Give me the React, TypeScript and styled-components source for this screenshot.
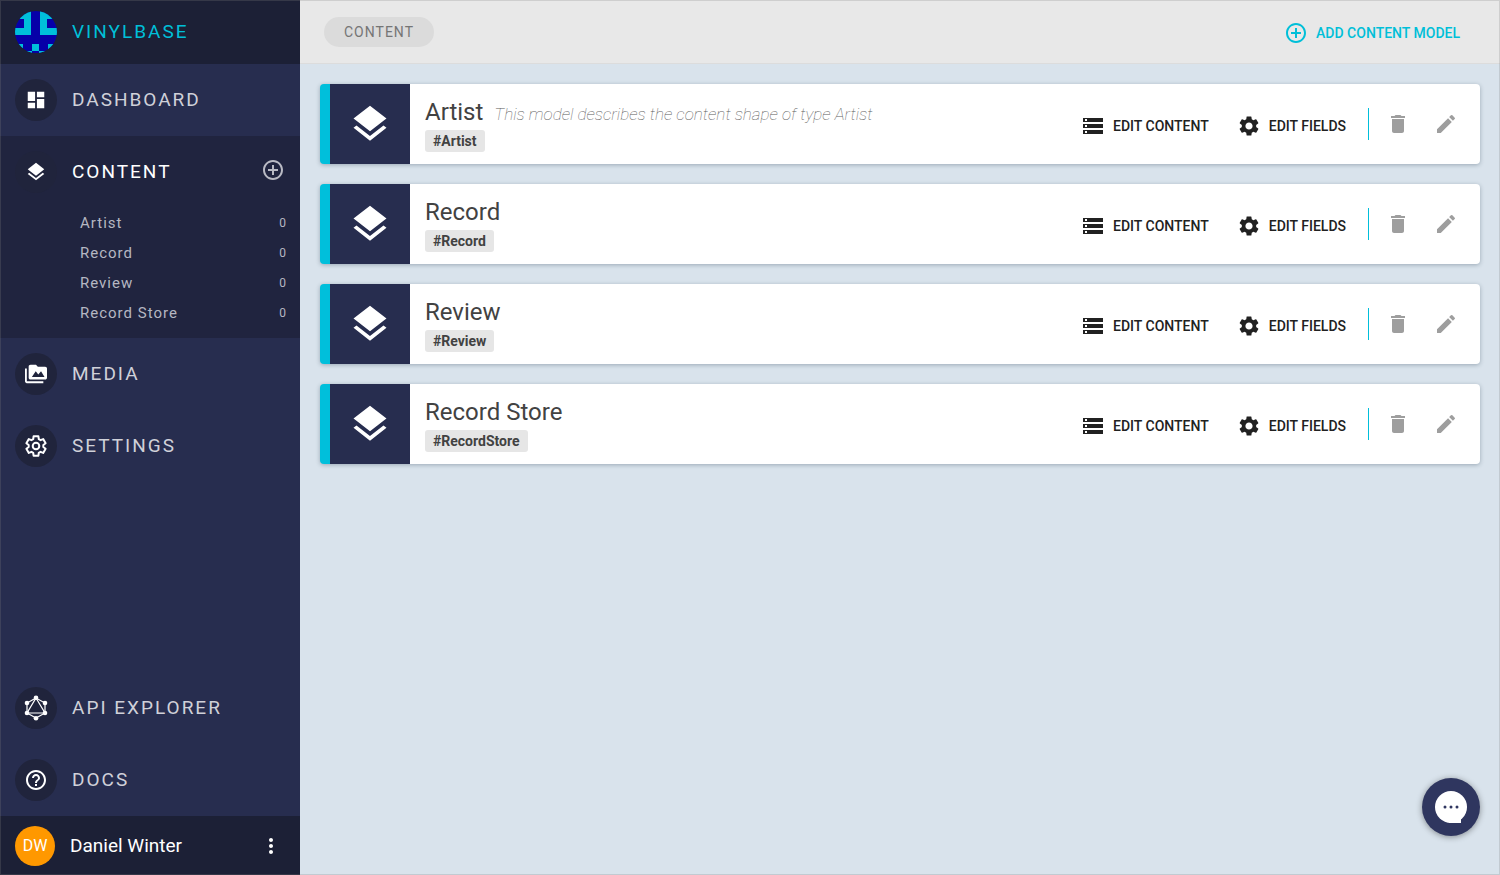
import React from 'react';
import styled, { createGlobalStyle } from 'styled-components';
import {
  MdAddCircleOutline,
  MdDashboard,
  MdDelete,
  MdEdit,
  MdHelpOutline,
  MdLayers,
  MdMoreVert,
  MdSettings,
  MdStorage,
} from 'react-icons/md';

const GlobalStyle = createGlobalStyle`
  * { box-sizing: border-box; }
  body {
    margin: 0;
    background: #d9e3ec;
    font-family: Roboto, "Liberation Sans", sans-serif;
  }
  button { border: 0; padding: 0; background: none; font-family: inherit; cursor: pointer; }
  a { color: inherit; text-decoration: none; }
  ul { list-style: none; margin: 0; padding: 0; }
  h1, h2, p { margin: 0; font-weight: 400; }
  svg { display: block; flex-shrink: 0; }
`;

const Page = styled.div`
  display: grid;
  grid-template-columns: 300px 1fr;
  min-height: 100vh;

  &::after {
    content: '';
    position: fixed;
    inset: 0;
    border: 1px solid rgba(128, 128, 128, 0.25);
    pointer-events: none;
  }
`;

const Sidebar = styled.aside`
  display: flex;
  flex-direction: column;
  background: #272d4f;
  color: #d0d1d9;
`;

const Brand = styled.a`
  display: flex;
  align-items: center;
  gap: 15px;
  height: 64px;
  padding: 0 15px;
  background: #1c2036;
  && { color: #00bfd8; }
  font-size: 19px;
  line-height: 24px;
  letter-spacing: 2px;
`;

const Nav = styled.nav`
  display: flex;
  flex: 1;
  flex-direction: column;
`;

const Section = styled.div<{ $active?: boolean; $pushed?: boolean }>`
  margin-top: ${(p) => (p.$pushed ? 'auto' : '0')};
  padding-bottom: ${(p) => (p.$active ? '10px' : '0')};
  background: ${(p) => (p.$active ? '#20243f' : 'transparent')};
  color: ${(p) => (p.$active ? '#ffffff' : 'inherit')};
`;

const NavRow = styled.div`
  display: flex;
  align-items: center;
  justify-content: space-between;
  height: 72px;
  padding: 0 15px;
`;

const NavLink = styled.a`
  display: flex;
  align-items: center;
  gap: 15px;
  font-size: 19px;
  line-height: 24px;
  letter-spacing: 2px;
`;

const NavIcon = styled.span`
  display: flex;
  align-items: center;
  justify-content: center;
  width: 42px;
  height: 42px;
  border-radius: 50%;
  background: #20243c;
  color: #ffffff;
`;

const AddButton = styled.button`
  padding-bottom: 4px;
  color: #b9bac4;
`;

const ModelLink = styled.a`
  display: flex;
  align-items: center;
  justify-content: space-between;
  height: 30px;
  padding: 0 13px 0 80px;
  color: #b5b7c2;
  font-size: 15px;
  letter-spacing: 1px;
`;

const Count = styled.span`
  font-size: 12px;
`;

const UserBar = styled.footer`
  display: flex;
  align-items: center;
  gap: 15px;
  height: 59px;
  padding: 0 17px 0 15px;
  background: #1c2036;
  color: #ffffff;
  font-size: 19px;
`;

const Avatar = styled.span`
  display: flex;
  align-items: center;
  justify-content: center;
  width: 40px;
  height: 40px;
  border-radius: 50%;
  background: #ff9800;
  font-size: 16px;
`;

const UserName = styled.span`
  flex: 1;
`;

const MenuButton = styled.button`
  color: #ffffff;
`;

const Header = styled.header`
  display: flex;
  align-items: center;
  justify-content: space-between;
  height: 64px;
  padding: 0 40px 0 24px;
  border-bottom: 1px solid #dcdcdc;
  background: #e8e8e8;
`;

const Crumb = styled.h1`
  padding: 0 20px;
  border-radius: 15px;
  background: #dbdbdb;
  color: #757575;
  font-size: 14px;
  line-height: 30px;
  letter-spacing: 1px;
`;

const ActionButton = styled.button<{ $accent?: boolean }>`
  display: flex;
  align-items: center;
  gap: 8px;
  padding-top: ${(p) => (p.$accent ? '2px' : '0')};
  color: ${(p) => (p.$accent ? '#00bfd8' : '#212121')};
  font-size: 14px;
  font-weight: 500;
  line-height: 24px;
`;

const ModelList = styled.ul`
  && { padding: 20px; }
  display: flex;
  flex-direction: column;
  gap: 20px;
`;

const Card = styled.li`
  display: flex;
  align-items: stretch;
  height: 80px;
  border-left: 10px solid #00bfdb;
  border-radius: 4px;
  background: #ffffff;
  box-shadow: 0 1px 4px rgba(40, 60, 80, 0.35);
`;

const CardIcon = styled.span`
  display: flex;
  align-items: center;
  justify-content: center;
  width: 80px;
  background: #272d4f;
  color: #ffffff;
`;

const CardText = styled.div`
  display: flex;
  flex: 1;
  flex-direction: column;
  align-items: flex-start;
  gap: 4px;
  padding: 14px 15px;
`;

const TitleLine = styled.div`
  display: flex;
  align-items: baseline;
  gap: 11px;
  height: 28px;
`;

const Title = styled.h2`
  color: #424242;
  font-size: 24px;
  line-height: 28px;
`;

const Description = styled.p`
  color: #5c5c5c;
  font-size: 17px;
  font-style: italic;
  && { font-weight: 100; }
  line-height: 28px;
`;

const Tag = styled.span`
  padding: 0 8px;
  border-radius: 3px;
  background: #e6e6e6;
  color: #424242;
  font-size: 14px;
  font-weight: 700;
  line-height: 22px;
`;

const CardActions = styled.div`
  display: flex;
  align-items: center;
  gap: 28px;
  padding: 4px 21px 0 0;
`;

const IconActions = styled.div`
  display: flex;
  align-items: center;
  gap: 24px;
  padding-right: 22px;
`;

const Divider = styled.span`
  width: 1px;
  height: 32px;
  margin: 0 -7px 0 1px;
  background: #00bfdb;
`;

const IconButton = styled.button`
  color: #9e9e9e;
`;

const ChatButton = styled.button`
  position: fixed;
  right: 20px;
  bottom: 39px;
  display: flex;
  align-items: center;
  justify-content: center;
  width: 58px;
  height: 58px;
  border-radius: 50%;
  && { background: #2f365f; }
  box-shadow: 0 1px 6px rgba(0, 0, 0, 0.4);
`;

const Logo = () => (
  <svg width="42" height="42" viewBox="0 0 42 42" aria-hidden="true">
    <clipPath id="disc">
      <circle cx="21" cy="21" r="21" />
    </clipPath>
    <g clipPath="url(#disc)">
      <rect width="42" height="42" fill="#0600a8" />
      <path
        fill="#00bfda"
        d="M0 0H16V24H0V17H9V8H0ZM42 0H25V24H42V17H32V8H42ZM17 33H24V40H17ZM0 33H8V38H0ZM33 33H42V38H33ZM9 40H17V42H9ZM24 40H33V42H24Z"
      />
    </g>
  </svg>
);

const MediaIcon = () => (
  <svg width="22" height="22" viewBox="0 0 24 24" aria-hidden="true">
    <path
      fill="currentColor"
      fillRule="evenodd"
      d="M2 6H0V20C0 21.100.9 22 2 22H20V20H2ZM22 4H14L12 2H6C4.900 2 4 2.900 4 4V16C4 17.100 4.900 18 6 18H22C23.100 18 24 17.100 24 16V6C24 4.900 23.100 4 22 4ZM7.500 15.200 11.700 9 14.500 12.500 17.500 9 21.300 15.200Z"
    />
  </svg>
);

// Outline of a six-toothed gear: each tooth has two outer and two inner corners.
const gearPoints = [0, 60, 120, 180, 240, 300]
  .flatMap((base) => [
    [base - 22, 7.4],
    [base - 14, 10],
    [base + 14, 10],
    [base + 22, 7.4],
  ])
  .map(([deg, r]) => {
    const a = (deg * Math.PI) / 180;
    return `${(12 + r * Math.sin(a)).toFixed(2)},${(12 - r * Math.cos(a)).toFixed(2)}`;
  })
  .join(' ');

const GearIcon = () => (
  <svg width="24" height="24" viewBox="0 0 24 24" aria-hidden="true">
    <g fill="none" stroke="currentColor" strokeWidth="2" strokeLinejoin="round">
      <polygon points={gearPoints} />
      <circle cx="12" cy="12" r="3.300" />
    </g>
  </svg>
);

const GraphIcon = () => (
  <svg width="26" height="26" viewBox="0 0 26 26" aria-hidden="true">
    <g fill="none" stroke="currentColor" strokeWidth="1.2">
      <path d="M13 3 22 8V18L13 23 4 18V8Z" />
      <path d="M13 3 22 18H4Z" />
    </g>
    <g fill="currentColor">
      <circle cx="13" cy="2.700" r="2.300" />
      <circle cx="22" cy="8" r="2.300" />
      <circle cx="22" cy="18" r="2.300" />
      <circle cx="13" cy="23.300" r="2.300" />
      <circle cx="4" cy="18" r="2.300" />
      <circle cx="4" cy="8" r="2.300" />
    </g>
  </svg>
);

const ChatIcon = () => (
  <svg width="32" height="32" viewBox="0 0 32 32" aria-hidden="true">
    <circle cx="16" cy="16" r="16" fill="#ffffff" />
    <path fill="#ffffff" d="M14 20H26V32H14Z" />
    <g fill="#2f365f">
      <circle cx="10" cy="16" r="1.500" />
      <circle cx="16" cy="16" r="1.500" />
      <circle cx="22" cy="16" r="1.500" />
    </g>
  </svg>
);

const models = [
  { name: 'Artist', tag: '#Artist', description: 'This model describes the content shape of type Artist' },
  { name: 'Record', tag: '#Record' },
  { name: 'Review', tag: '#Review' },
  { name: 'Record Store', tag: '#RecordStore' },
];

type NavItemProps = { icon: React.ReactNode; label: string };

const NavItem = ({ icon, label }: NavItemProps) => (
  <NavLink href="#">
    <NavIcon>{icon}</NavIcon>
    {label}
  </NavLink>
);

export default function App() {
  return (
    <Page>
      <GlobalStyle />
      <Sidebar>
        <Brand href="#">
          <Logo />
          VINYLBASE
        </Brand>
        <Nav>
          <Section>
            <NavRow><NavItem icon={<MdDashboard size={22} />} label="DASHBOARD" /></NavRow>
          </Section>
          <Section $active>
            <NavRow>
              <NavItem icon={<MdLayers size={22} />} label="CONTENT" />
              <AddButton aria-label="Add content"><MdAddCircleOutline size={24} /></AddButton>
            </NavRow>
            <ul>
              {models.map((m) => (
                <li key={m.name}>
                  <ModelLink href="#">{m.name}<Count>0</Count></ModelLink>
                </li>
              ))}
            </ul>
          </Section>
          <Section>
            <NavRow><NavItem icon={<MediaIcon />} label="MEDIA" /></NavRow>
          </Section>
          <Section>
            <NavRow><NavItem icon={<GearIcon />} label="SETTINGS" /></NavRow>
          </Section>
          <Section $pushed>
            <NavRow><NavItem icon={<GraphIcon />} label="API EXPLORER" /></NavRow>
          </Section>
          <Section>
            <NavRow><NavItem icon={<MdHelpOutline size={24} />} label="DOCS" /></NavRow>
          </Section>
        </Nav>
        <UserBar>
          <Avatar>DW</Avatar>
          <UserName>Daniel Winter</UserName>
          <MenuButton aria-label="User menu"><MdMoreVert size={24} /></MenuButton>
        </UserBar>
      </Sidebar>
      <main>
        <Header>
          <Crumb>CONTENT</Crumb>
          <ActionButton $accent>
            <MdAddCircleOutline size={24} />
            ADD CONTENT MODEL
          </ActionButton>
        </Header>
        <ModelList>
          {models.map((m) => (
            <Card key={m.name}>
              <CardIcon><MdLayers size={44} /></CardIcon>
              <CardText>
                <TitleLine>
                  <Title>{m.name}</Title>
                  {m.description && <Description>{m.description}</Description>}
                </TitleLine>
                <Tag>{m.tag}</Tag>
              </CardText>
              <CardActions>
                <ActionButton><MdStorage size={24} />EDIT CONTENT</ActionButton>
                <ActionButton><MdSettings size={24} />EDIT FIELDS</ActionButton>
              </CardActions>
              <IconActions>
                <Divider />
                <IconButton aria-label={`Delete ${m.name}`}><MdDelete size={24} /></IconButton>
                <IconButton aria-label={`Edit ${m.name}`}><MdEdit size={24} /></IconButton>
              </IconActions>
            </Card>
          ))}
        </ModelList>
      </main>
      <ChatButton aria-label="Open chat"><ChatIcon /></ChatButton>
    </Page>
  );
}
